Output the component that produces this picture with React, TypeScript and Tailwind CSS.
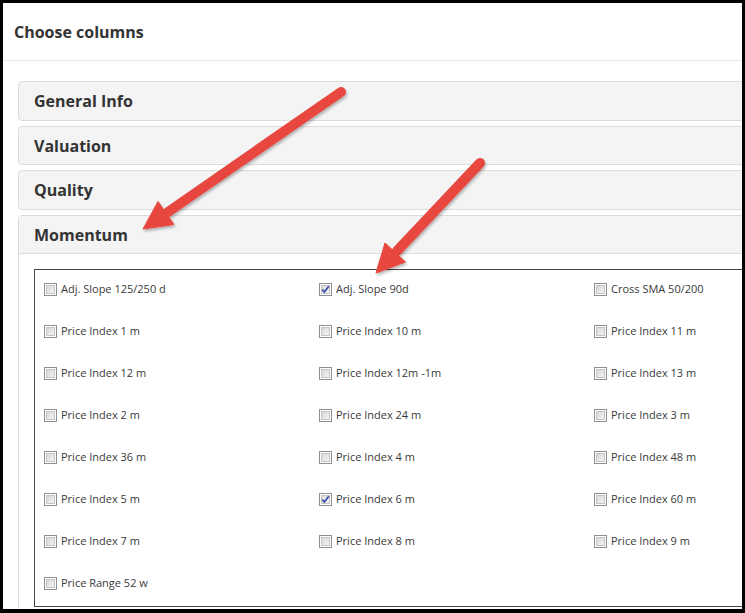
import React from 'react';

interface ColumnOption {
  label: string;
  checked?: boolean;
}

const momentumColumns: ColumnOption[] = [
  { label: 'Adj. Slope 125/250 d' },
  { label: 'Adj. Slope 90d', checked: true },
  { label: 'Cross SMA 50/200' },
  { label: 'Price Index 1 m' },
  { label: 'Price Index 10 m' },
  { label: 'Price Index 11 m' },
  { label: 'Price Index 12 m' },
  { label: 'Price Index 12m -1m' },
  { label: 'Price Index 13 m' },
  { label: 'Price Index 2 m' },
  { label: 'Price Index 24 m' },
  { label: 'Price Index 3 m' },
  { label: 'Price Index 36 m' },
  { label: 'Price Index 4 m' },
  { label: 'Price Index 48 m' },
  { label: 'Price Index 5 m' },
  { label: 'Price Index 6 m', checked: true },
  { label: 'Price Index 60 m' },
  { label: 'Price Index 7 m' },
  { label: 'Price Index 8 m' },
  { label: 'Price Index 9 m' },
  { label: 'Price Range 52 w' },
];

// heights differ by a pixel in the source shot
const collapsedGroups = [
  { title: 'General Info', h: 'h-[40px]' },
  { title: 'Valuation', h: 'h-[39px]' },
  { title: 'Quality', h: 'h-[40px]' },
];

const Checkbox: React.FC<{ checked?: boolean }> = ({ checked = false }) => (
  <span className="relative flex h-[13px] w-[13px] shrink-0 items-center justify-center border border-[#8f8f8f] bg-white">
    <span className="h-[9px] w-[9px] border border-[#c4c4c4] bg-gradient-to-br from-[#d8d8d8] to-[#f4f4f4]" />
    {checked && (
      <svg className="absolute left-[1px] top-[1px]" width="9" height="9" viewBox="0 0 9 9">
        <path d="M1.2 4.6 L3.4 7 L7.8 1.2" fill="none" stroke="#2f4da8" strokeWidth="1.7" />
      </svg>
    )}
  </span>
);

const GroupHeader: React.FC<{ title: string; h: string }> = ({ title, h }) => (
  <div className={`flex ${h} items-center rounded-[4px] border border-[#dcdcdc] bg-[#f4f4f4] px-[15px]`}>
    <h3 className="text-[16px] font-bold text-[#333]">{title}</h3>
  </div>
);

const Arrows: React.FC = () => (
  <svg className="pointer-events-none absolute left-0 top-0" width="745" height="613" viewBox="0 0 745 613">
    <defs>
      <filter id="arrowShadow" x="-20%" y="-20%" width="140%" height="140%">
        <feDropShadow dx="1" dy="2" stdDeviation="1.5" floodColor="#000" floodOpacity="0.3" />
      </filter>
    </defs>
    <g filter="url(#arrowShadow)" fill="#e8473f" stroke="#e8473f">
      <line x1="341" y1="92" x2="168" y2="212" strokeWidth="10" strokeLinecap="round" />
      <polygon points="143,229 158,201.5 174,224.5" strokeWidth="1" strokeLinejoin="round" />
      <line x1="480" y1="163" x2="397" y2="251" strokeWidth="10" strokeLinecap="round" />
      <polygon points="376,273 385,243 405.5,262" strokeWidth="1" strokeLinejoin="round" />
    </g>
  </svg>
);

const App: React.FC = () => {
  return (
    <div className="relative h-[613px] w-[745px] overflow-hidden bg-black pb-[4px] pl-[3px] pr-[3px] pt-[3px] font-['Open_Sans',sans-serif]">
      <div className="h-full w-full overflow-hidden bg-white">
        <div className="flex h-[58px] items-center border-b border-[#e5e5e5] px-[11px]">
          <h2 className="text-[16px] font-bold text-[#333]">Choose columns</h2>
        </div>

        <div className="w-[800px] pl-[15px] pt-[20px]">
          <div className="flex flex-col gap-[5px]">
            {collapsedGroups.map((g) => (
              <GroupHeader key={g.title} title={g.title} h={g.h} />
            ))}

            <div className="rounded-[4px] border border-[#dcdcdc]">
              <div className="flex h-[38px] items-center border-b border-[#dcdcdc] bg-[#f4f4f4] px-[15px]">
                <h3 className="text-[16px] font-bold text-[#333]">Momentum</h3>
              </div>
              <div className="p-[15px]">
                <div className="border border-[#444] pb-[14px] pl-[9px] pt-[10px]">
                  <div className="grid grid-cols-[275px_275px_275px] gap-y-[24px]">
                    {momentumColumns.map((col) => (
                      <label key={col.label} className="flex h-[18px] items-center gap-[4px]">
                        <Checkbox checked={col.checked} />
                        <span className="whitespace-nowrap text-[11px] text-[#3a3a3a]">{col.label}</span>
                      </label>
                    ))}
                  </div>
                </div>
              </div>
            </div>
          </div>
        </div>
      </div>
      <Arrows />
    </div>
  );
};

export default App;
